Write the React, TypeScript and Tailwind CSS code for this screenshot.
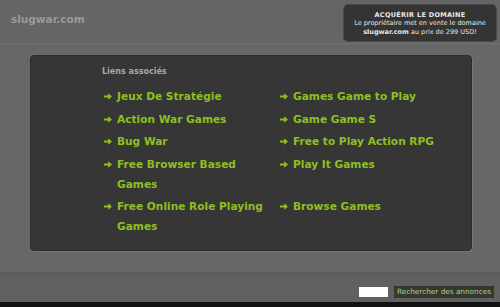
import React from 'react';

const ROWS: [string, string][] = [
  ['Jeux De Stratégie', 'Games Game to Play'],
  ['Action War Games', 'Game Game S'],
  ['Bug War', 'Free to Play Action RPG'],
  ['Free Browser Based Games', 'Play It Games'],
  ['Free Online Role Playing Games', 'Browse Games'],
];

function Arrow() {
  return (
    <svg width="8" height="7" viewBox="0 0 8 7" className="shrink-0 mt-[7px] mr-[5px]" fill="currentColor">
      <path d="M0 2.5H4.2V0.3L8 3.5L4.2 6.7V4.5H0Z" />
    </svg>
  );
}

function LinkItem({ label }: { label: string }) {
  return (
    <a href="#" className="flex items-start text-[#8cc020] leading-[20px] no-underline">
      <Arrow />
      <span className="max-w-[152px]">{label}</span>
    </a>
  );
}

export default function App() {
  return (
    <div
      className="w-[500px] h-[307px] bg-[#656565] flex flex-col overflow-hidden"
      style={{ fontFamily: '"DejaVu Sans", sans-serif' }}
    >
      {/* Header */}
      <div className="h-[43px] shrink-0 flex items-start justify-between pl-[11px] pr-[3px] pt-[4px]">
        <div className="pt-[8px] text-[10.5px] font-bold text-[#9a9a9a]">slugwar.com</div>
        <div className="w-[154px] h-[38px] rounded-[5px] border border-[#4a4a4a] bg-[#343434] flex flex-col items-center justify-center text-[#e8e8e8] text-[6.5px] leading-[8.5px] pt-[1px]">
          <div className="font-bold tracking-[0.3px]">ACQUÉRIR LE DOMAINE</div>
          <div>Le propriétaire met en vente le domaine</div>
          <div>
            <span className="font-bold">slugwar.com</span> au prix de 299 USD!
          </div>
        </div>
      </div>

      {/* Main band */}
      <div className="h-[229px] shrink-0 border-t border-[#707070] bg-[#676767] pt-[11px] pl-[30px]">
        <div className="w-[442px] h-[196px] rounded-[4px] border border-[#2c2c2c] bg-[#363636] shadow-[1px_1px_0_#777] pl-[71px] pt-[10px]">
          <div className="text-[8px] font-bold text-[#a8a8a8] mb-[8px]">Liens associés</div>
          <div className="ml-[2px] grid grid-cols-[176px_180px] gap-y-[2.5px] text-[10.6px] font-bold">
            {ROWS.map(([a, b]) => (
              <React.Fragment key={a}>
                <LinkItem label={a} />
                <LinkItem label={b} />
              </React.Fragment>
            ))}
          </div>
        </div>
      </div>

      {/* Footer */}
      <div className="flex-1 border-t border-[#5a5a5a] bg-[#606060] flex justify-end items-start pt-[13px] pr-[6px] gap-[6px]">
        <div className="w-[29px] h-[10px] bg-white mt-[1px]" />
        <div className="h-[12px] bg-[#353a30] px-[3px] text-[7.3px] leading-[12px] text-[#b8c68c]">
          Rechercher des annonces
        </div>
      </div>
      <div className="h-[5px] shrink-0 bg-[#111]" />
    </div>
  );
}
